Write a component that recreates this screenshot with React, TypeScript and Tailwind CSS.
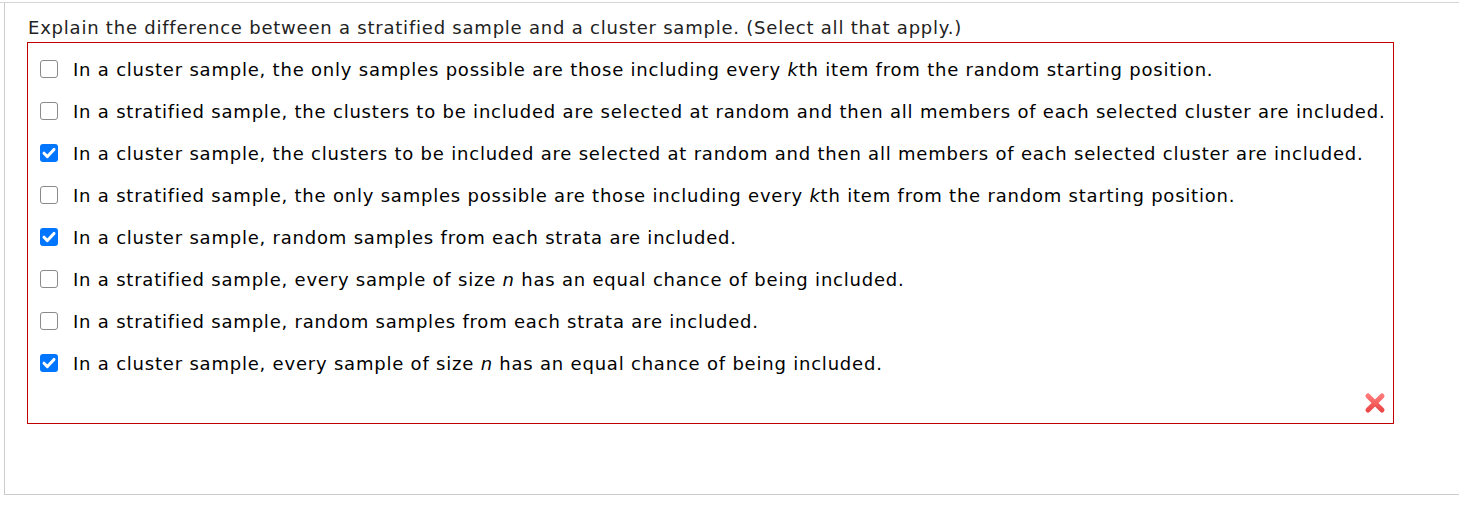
import React from 'react';

type Option = { text: React.ReactNode; checked: boolean };

const options: Option[] = [
  {
    checked: false,
    text: (
      <>
        In a cluster sample, the only samples possible are those including every <i>k</i>th item from the random starting position.
      </>
    ),
  },
  {
    checked: false,
    text: 'In a stratified sample, the clusters to be included are selected at random and then all members of each selected cluster are included.',
  },
  {
    checked: true,
    text: 'In a cluster sample, the clusters to be included are selected at random and then all members of each selected cluster are included.',
  },
  {
    checked: false,
    text: (
      <>
        In a stratified sample, the only samples possible are those including every <i>k</i>th item from the random starting position.
      </>
    ),
  },
  { checked: true, text: 'In a cluster sample, random samples from each strata are included.' },
  {
    checked: false,
    text: (
      <>
        In a stratified sample, every sample of size <i>n</i> has an equal chance of being included.
      </>
    ),
  },
  { checked: false, text: 'In a stratified sample, random samples from each strata are included.' },
  {
    checked: true,
    text: (
      <>
        In a cluster sample, every sample of size <i>n</i> has an equal chance of being included.
      </>
    ),
  },
];

function Box({ checked }: { checked: boolean }) {
  if (checked) {
    return (
      <span className="flex h-[18px] w-[18px] shrink-0 items-center justify-center rounded-[3px] bg-[#0075ff]">
        <svg viewBox="0 0 18 18" className="h-[18px] w-[18px]" aria-hidden="true">
          <path d="M4 9.2 L7.4 12.6 L14 5.4" fill="none" stroke="#fff" strokeWidth="3" strokeLinecap="round" strokeLinejoin="round" />
        </svg>
      </span>
    );
  }
  return <span className="h-[18px] w-[18px] shrink-0 rounded-[3px] border border-[#8a8a8a] bg-white" />;
}

function WrongMark() {
  return (
    <svg viewBox="0 0 22 22" className="h-[22px] w-[22px]" aria-hidden="true">
      <defs>
        <linearGradient id="xg" x1="0" y1="0" x2="0" y2="1">
          <stop offset="0" stopColor="#ff7878" />
          <stop offset="1" stopColor="#ec4848" />
        </linearGradient>
      </defs>
      <path d="M4 4 L18 18 M18 4 L4 18" stroke="url(#xg)" strokeWidth="5" strokeLinecap="round" />
    </svg>
  );
}

export default function App() {
  return (
    <div className="min-h-[529px] bg-white pt-[2px] font-['DejaVu_Sans',Verdana,sans-serif] text-[#222]">
      <div className="border-t border-[#d4d4d4]">
        <div className="ml-[4px] h-[492px] border-b border-l border-[#cccccc] pl-[22px] pt-[13px]">
          <div className="pl-[1px] text-[18px] leading-[24px] tracking-[0.78px]">
            Explain the difference between a stratified sample and a cluster sample. (Select all that apply.)
          </div>
          <div className="mt-[2px] w-[1367px] border border-[#c00000] pl-[12px] pr-[4px] pt-[5px] pb-[9px]">
            {options.map((o, i) => (
              <div key={i} className="flex h-[42px] items-center gap-[15px] whitespace-nowrap text-[18px] tracking-[0.79px] text-black">
                <Box checked={o.checked} />
                <span>{o.text}</span>
              </div>
            ))}
            <div className="mr-[3px] flex justify-end pt-[8px]">
              <WrongMark />
            </div>
          </div>
        </div>
      </div>
    </div>
  );
}
